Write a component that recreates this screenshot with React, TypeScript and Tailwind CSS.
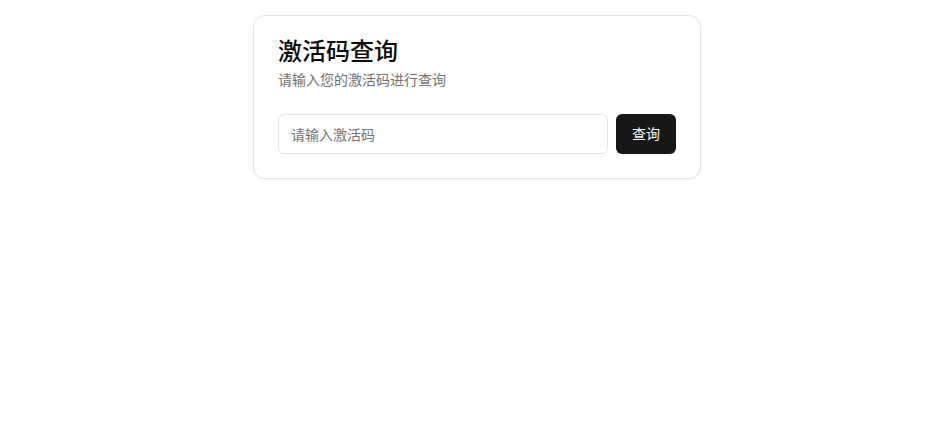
import React from "react";

export default function App() {
  return (
    <div
      className="min-h-[427px] w-full bg-white flex justify-center pt-[15px] pl-[28px]"
      style={{ fontFamily: '"Inter", "Noto Sans CJK SC", sans-serif' }}
    >
      <div className="w-[448px] h-fit rounded-xl border border-[#e5e5e5] bg-white shadow-[0_1px_2px_rgba(0,0,0,0.05)] text-[#0a0a0a]">
        <div className="flex flex-col gap-1.5 p-6">
          <h1 className="text-2xl font-medium leading-none">激活码查询</h1>
          <p className="text-sm text-[#737373]">请输入您的激活码进行查询</p>
        </div>
        <div className="px-6 pb-6">
          <div className="flex gap-2">
            <input
              className="h-10 flex-1 rounded-md border border-[#e5e5e5] bg-white px-3 text-sm placeholder:text-[#737373] outline-none"
              placeholder="请输入激活码"
            />
            <button className="h-10 rounded-md bg-[#171717] px-4 text-sm font-normal text-[#fafafa]">
              查询
            </button>
          </div>
        </div>
      </div>
    </div>
  );
}
